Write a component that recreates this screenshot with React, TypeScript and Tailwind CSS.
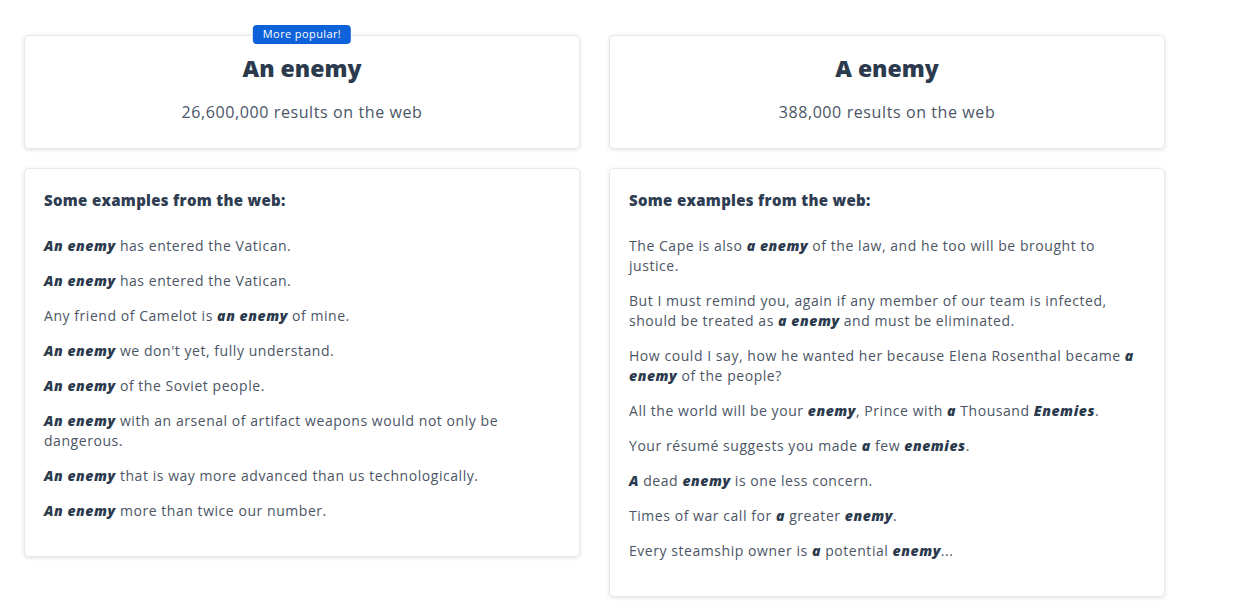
import React from 'react'

type Part = string | { b: string }

const font = { fontFamily: '"Open Sans", "Noto Sans", sans-serif' }

const leftExamples: Part[][] = [
  [{ b: 'An enemy' }, ' has entered the Vatican.'],
  [{ b: 'An enemy' }, ' has entered the Vatican.'],
  ['Any friend of Camelot is ', { b: 'an enemy' }, ' of mine.'],
  [{ b: 'An enemy' }, " we don't yet, fully understand."],
  [{ b: 'An enemy' }, ' of the Soviet people.'],
  [{ b: 'An enemy' }, ' with an arsenal of artifact weapons would not only be dangerous.'],
  [{ b: 'An enemy' }, ' that is way more advanced than us technologically.'],
  [{ b: 'An enemy' }, ' more than twice our number.'],
]

const rightExamples: Part[][] = [
  ['The Cape is also ', { b: 'a enemy' }, ' of the law, and he too will be brought to justice.'],
  ['But I must remind you, again if any member of our team is infected, should be treated as ', { b: 'a enemy' }, ' and must be eliminated.'],
  ['How could I say, how he wanted her because Elena Rosenthal became ', { b: 'a enemy' }, ' of the people?'],
  ['All the world will be your ', { b: 'enemy' }, ', Prince with ', { b: 'a' }, ' Thousand ', { b: 'Enemies' }, '.'],
  ['Your résumé suggests you made ', { b: 'a' }, ' few ', { b: 'enemies' }, '.'],
  [{ b: 'A' }, ' dead ', { b: 'enemy' }, ' is one less concern.'],
  ['Times of war call for ', { b: 'a' }, ' greater ', { b: 'enemy' }, '.'],
  ['Every steamship owner is ', { b: 'a' }, ' potential ', { b: 'enemy' }, '...'],
]

function Summary({ title, count, popular }: { title: string; count: string; popular?: boolean }) {
  return (
    <div className="relative h-[114px] rounded-[5px] bg-white border border-[#e6e8eb] shadow-[0_1px_4px_rgba(0,0,0,0.12)] flex flex-col items-center">
      {popular && (
        <span className="absolute -top-[11px] left-1/2 -translate-x-1/2 rounded-[4px] bg-[#0d62d9] px-[10px] h-[19px] flex items-center text-[11px] tracking-[0.4px] text-white">
          More popular!
        </span>
      )}
      <h2 className="mt-[17px] text-[23px] leading-[30px] font-extrabold text-[#2b3a4d]">{title}</h2>
      <p className="mt-[19px] text-[16px] leading-[20px] tracking-[0.6px] text-[#4a5566]">{count} results on the web</p>
    </div>
  )
}

function Examples({ items }: { items: Part[][] }) {
  return (
    <div className="rounded-[5px] bg-white border border-[#e6e8eb] shadow-[0_1px_4px_rgba(0,0,0,0.12)] px-[19px] pt-[19px] pb-[20px]">
      <h3 className="text-[15px] leading-[24px] font-extrabold tracking-[0.3px] text-[#2f3d52]">Some examples from the web:</h3>
      <div className="mt-[24px]">
        {items.map((parts, i) => (
          <p key={i} className="mb-[15px] text-[14px] leading-[20px] tracking-[0.55px] text-[#4b5565]">
            {parts.map((p, j) =>
              typeof p === 'string' ? (
                <span key={j}>{p}</span>
              ) : (
                <b key={j} className="font-extrabold italic text-[#2b3a4d]">{p.b}</b>
              )
            )}
          </p>
        ))}
      </div>
    </div>
  )
}

export default function App() {
  return (
    <div className="min-h-[611px] bg-white pl-[24px] pt-[35px]" style={font}>
      <div className="grid grid-cols-[556px_556px] gap-x-[29px] gap-y-[19px] items-start">
        <Summary title="An enemy" count="26,600,000" popular />
        <Summary title="A enemy" count="388,000" />
        <Examples items={leftExamples} />
        <Examples items={rightExamples} />
      </div>
    </div>
  )
}
